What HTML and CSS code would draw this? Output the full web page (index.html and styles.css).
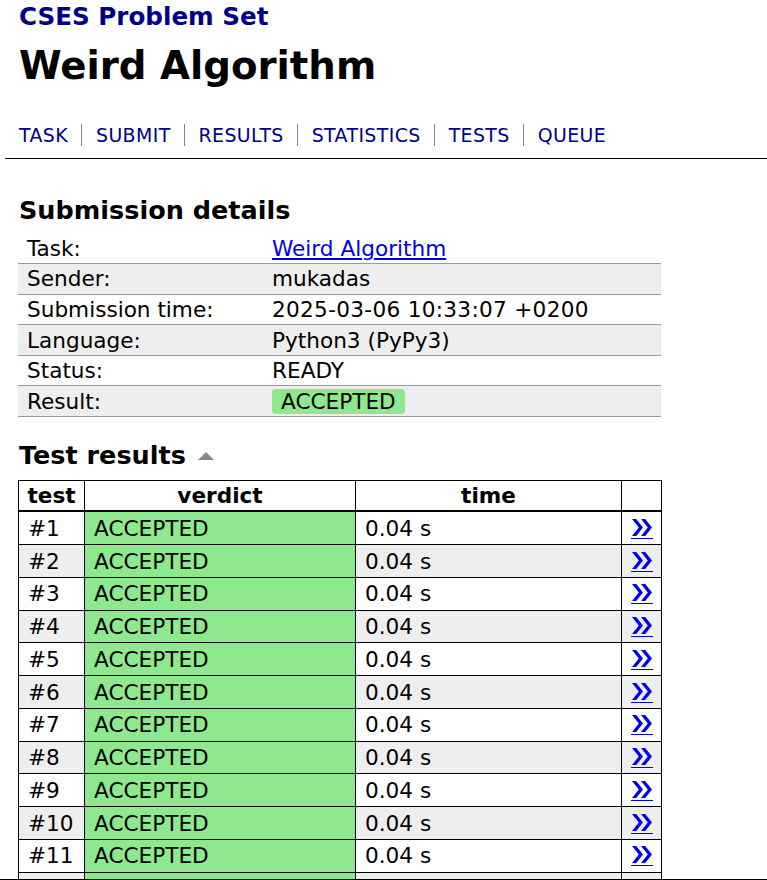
FILE: index.html
```html
<!DOCTYPE html>
<html lang="en">
<head>
<meta charset="utf-8">
<title>CSES - Weird Algorithm - Results</title>
<link rel="stylesheet" href="styles.css">
</head>
<body>
<header class="header">
  <div class="site-title"><a href="#">CSES Problem Set</a></div>
  <h1 class="task-title">Weird Algorithm</h1>
  <nav class="nav">
    <a class="nav-link" href="#">TASK</a>
    <a class="nav-link" href="#">SUBMIT</a>
    <a class="nav-link" href="#">RESULTS</a>
    <a class="nav-link" href="#">STATISTICS</a>
    <a class="nav-link" href="#">TESTS</a>
    <a class="nav-link" href="#">QUEUE</a>
  </nav>
</header>
<hr class="rule">
<main class="content">
  <h2 class="section-title">Submission details</h2>
  <table class="details">
    <colgroup><col class="details-key"><col></colgroup>
    <tr><td>Task:</td><td><a class="plain-link" href="#">Weird Algorithm</a></td></tr>
    <tr><td>Sender:</td><td>mukadas</td></tr>
    <tr><td>Submission time:</td><td class="mono-ish">2025-03-06 10:33:07 +0200</td></tr>
    <tr><td>Language:</td><td>Python3 (PyPy3)</td></tr>
    <tr><td>Status:</td><td>READY</td></tr>
    <tr><td>Result:</td><td><span class="badge">ACCEPTED</span></td></tr>
  </table>

  <h2 class="section-title tests-title">Test results <svg class="sort-icon" width="16" height="8" viewBox="0 0 16 8"><polygon points="8,0 16,8 0,8" fill="#888"/></svg></h2>
  <table class="tests">
    <colgroup><col class="c-test"><col class="c-verdict"><col class="c-time"><col class="c-link"></colgroup>
    <thead>
      <tr><th>test</th><th>verdict</th><th>time</th><th></th></tr>
    </thead>
    <tbody id="rows"></tbody>
  </table>
</main>
<div class="viewport-edge"></div>
<script>
  var tb = document.getElementById('rows');
  var html = '';
  for (var i = 1; i <= 12; i++) {
    html += '<tr><td>#' + i + '</td><td class="ac">ACCEPTED</td><td>0.04 s</td>' +
      '<td class="link-cell"><a class="go" href="#"><svg width="20" height="17" viewBox="0 0 20 17"><polygon points="0,0 4.2,0 11,8.5 4.2,17 0,17 6.8,8.5" fill="#0000ee"/><polygon points="9,0 13.2,0 20,8.5 13.2,17 9,17 15.8,8.5" fill="#0000ee"/></svg></a></td></tr>';
  }
  tb.innerHTML = html;
</script>
</body>
</html>
```
FILE: styles.css
```css
html, body {
  margin: 0;
  padding: 0;
  background: #fff;
}
body {
  font-family: "DejaVu Sans", Verdana, sans-serif;
  font-size: 21.6px;
  color: #000;
}
.header {
  padding: 3px 0 0 19px;
}
.site-title {
  font-size: 24.6px;
  font-weight: bold;
  line-height: 28px;
}
.site-title a {
  color: #000088;
  text-decoration: none;
}
.task-title {
  font-size: 38.7px;
  font-weight: bold;
  line-height: 46px;
  margin: 12px 0 0;
}
.nav {
  display: flex;
  margin-top: 34.5px;
  font-size: 18.9px;
  line-height: 22px;
  letter-spacing: 0.4px;
}
.nav-link {
  color: #000088;
  text-decoration: none;
  padding: 0 13px 0 14px;
  border-left: 1px solid #888;
}
.nav-link:first-child {
  padding-left: 0;
  border-left: none;
}
.rule {
  border: 0;
  border-top: 1px solid #000;
  margin: 12px 0 0 5px;
  height: 0;
}
.content {
  padding-left: 18px;
  width: 643px;
}
.section-title {
  font-size: 25.5px;
  font-weight: bold;
  line-height: 30px;
  margin: 36px 0 9px 1px;
}
.tests-title {
  margin-top: 23px;
  margin-bottom: 10px;
}
.sort-icon {
  margin-left: 3px;
  vertical-align: 4px;
}
.details {
  border-collapse: collapse;
  width: 643px;
}
.details-key {
  width: 245px;
}
.details td {
  padding: 2.3px 9px;
  line-height: 25px;
  border-bottom: 1px solid #999;
  vertical-align: top;
}
.details td.mono-ish {
  letter-spacing: 0.3px;
}
.details tr:nth-child(even) td {
  background: #eee;
}
.plain-link {
  color: #0000ee;
  text-decoration: underline;
}
.badge {
  display: inline-block;
  vertical-align: top;
  background: #8ee88e;
  border-radius: 4px;
  padding: 0 9px;
  line-height: 25px;
}
.tests {
  border-collapse: collapse;
  table-layout: fixed;
  width: 643px;
}
.c-test { width: 66px; }
.c-verdict { width: 271px; }
.c-time { width: 266px; }
.c-link { width: 40px; }
.tests th {
  border: 1px solid #000;
  border-bottom: 2px solid #000;
  padding: 2.2px 0;
  line-height: 25px;
  font-weight: bold;
  text-align: center;
  white-space: nowrap;
}
.tests td {
  border: 1px solid #000;
  padding: 3.375px 9px;
  line-height: 25px;
  text-align: left;
  white-space: nowrap;
}
.tests tbody tr:nth-child(even) td {
  background: #eee;
}
.tests tbody tr td.ac {
  background: #8ee88e;
}
.tests td.link-cell {
  padding: 0;
  text-align: center;
  vertical-align: middle;
}
.go {
  display: block;
  width: 22px;
  margin: 0 auto;
  padding: 1px 0 2px;
  border-bottom: 1px solid #0000ee;
  line-height: 0;
}
.go svg {
  display: block;
  margin-left: 1px;
}
.viewport-edge {
  position: fixed;
  left: 0;
  right: 0;
  bottom: 0;
  height: 1px;
  background: #000;
}
```
